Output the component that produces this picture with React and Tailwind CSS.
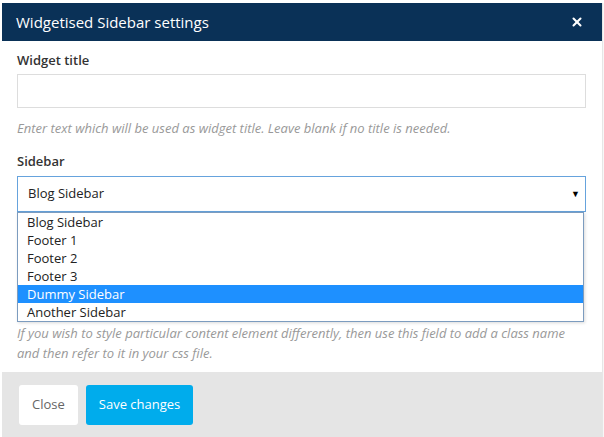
import { X } from 'lucide-react'

const sidebars = ['Blog Sidebar', 'Footer 1', 'Footer 2', 'Footer 3', 'Dummy Sidebar', 'Another Sidebar']

export default function App() {
  return (
    <div
      className="flex h-[437px] w-[604px] overflow-hidden bg-white pt-[3px] pl-[2px]"
      style={{ fontFamily: '"Open Sans", "Liberation Sans", sans-serif' }}
    >
      <div className="flex w-[600px] flex-col">
        <div className="flex h-[38px] shrink-0 items-center justify-between bg-[#0a3157] pr-[18px] pl-[14px]">
          <h2 className="text-[15px] text-white">Widgetised Sidebar settings</h2>
          <X className="h-[14px] w-[14px] text-white" strokeWidth={3.5} />
        </div>

        <div className="flex flex-col bg-white px-[15px] pt-[9px] pb-[9px]">
          <label className="text-[13px] leading-5 font-semibold text-[#333]">Widget title</label>
          <input className="mt-[4px] h-[34px] w-[569px] border border-[#ddd] bg-white" />
          <p className="mt-[10px] text-[13px] leading-5 text-[#999] italic">
            Enter text which will be used as widget title. Leave blank if no title is needed.
          </p>

          <label className="mt-[13px] text-[13px] leading-5 font-semibold text-[#333]">Sidebar</label>
          <div className="relative mt-[5px] w-[569px]">
            <div className="flex h-[36px] items-center justify-between border border-[#66a3dd] pr-[5px] pl-[10px] text-[13px] text-[#222]">
              <span>Blog Sidebar</span>
              <span className="text-[9px] text-black">▼</span>
            </div>
            <ul className="absolute top-full left-0 z-10 w-[567px] border border-[#7c9cbf] bg-white text-[13px] leading-[18px] text-[#222] shadow-[1px_1px_3px_rgba(0,0,0,0.15)]">
              {sidebars.map((name) => (
                <li
                  key={name}
                  className={
                    name === 'Dummy Sidebar'
                      ? 'h-[18px] bg-[#1e90ff] pl-[9px] text-white'
                      : 'h-[18px] pl-[9px]'
                  }
                >
                  {name}
                </li>
              ))}
            </ul>
          </div>

          {/* space for the field hidden behind the open list */}
          <div className="h-[111px]" />
          <p className="w-[569px] text-[13px] leading-5 text-[#999] italic">
            If you wish to style particular content element differently, then use this field to add a class name
            and then refer to it in your css file.
          </p>
        </div>

        <div className="flex flex-1 items-start gap-[8px] bg-[#e5e5e5] pt-[13px] pl-[17px]">
          <button className="h-[40px] rounded-[3px] bg-white px-[13px] text-[13px] text-[#666]">Close</button>
          <button className="h-[40px] rounded-[3px] bg-[#00acec] px-[13px] text-[13px] text-white">
            Save changes
          </button>
        </div>
      </div>
      <div className="h-full w-[2px] border-l border-[#e6e6e6] bg-[#f7f7f7]" />
    </div>
  )
}
